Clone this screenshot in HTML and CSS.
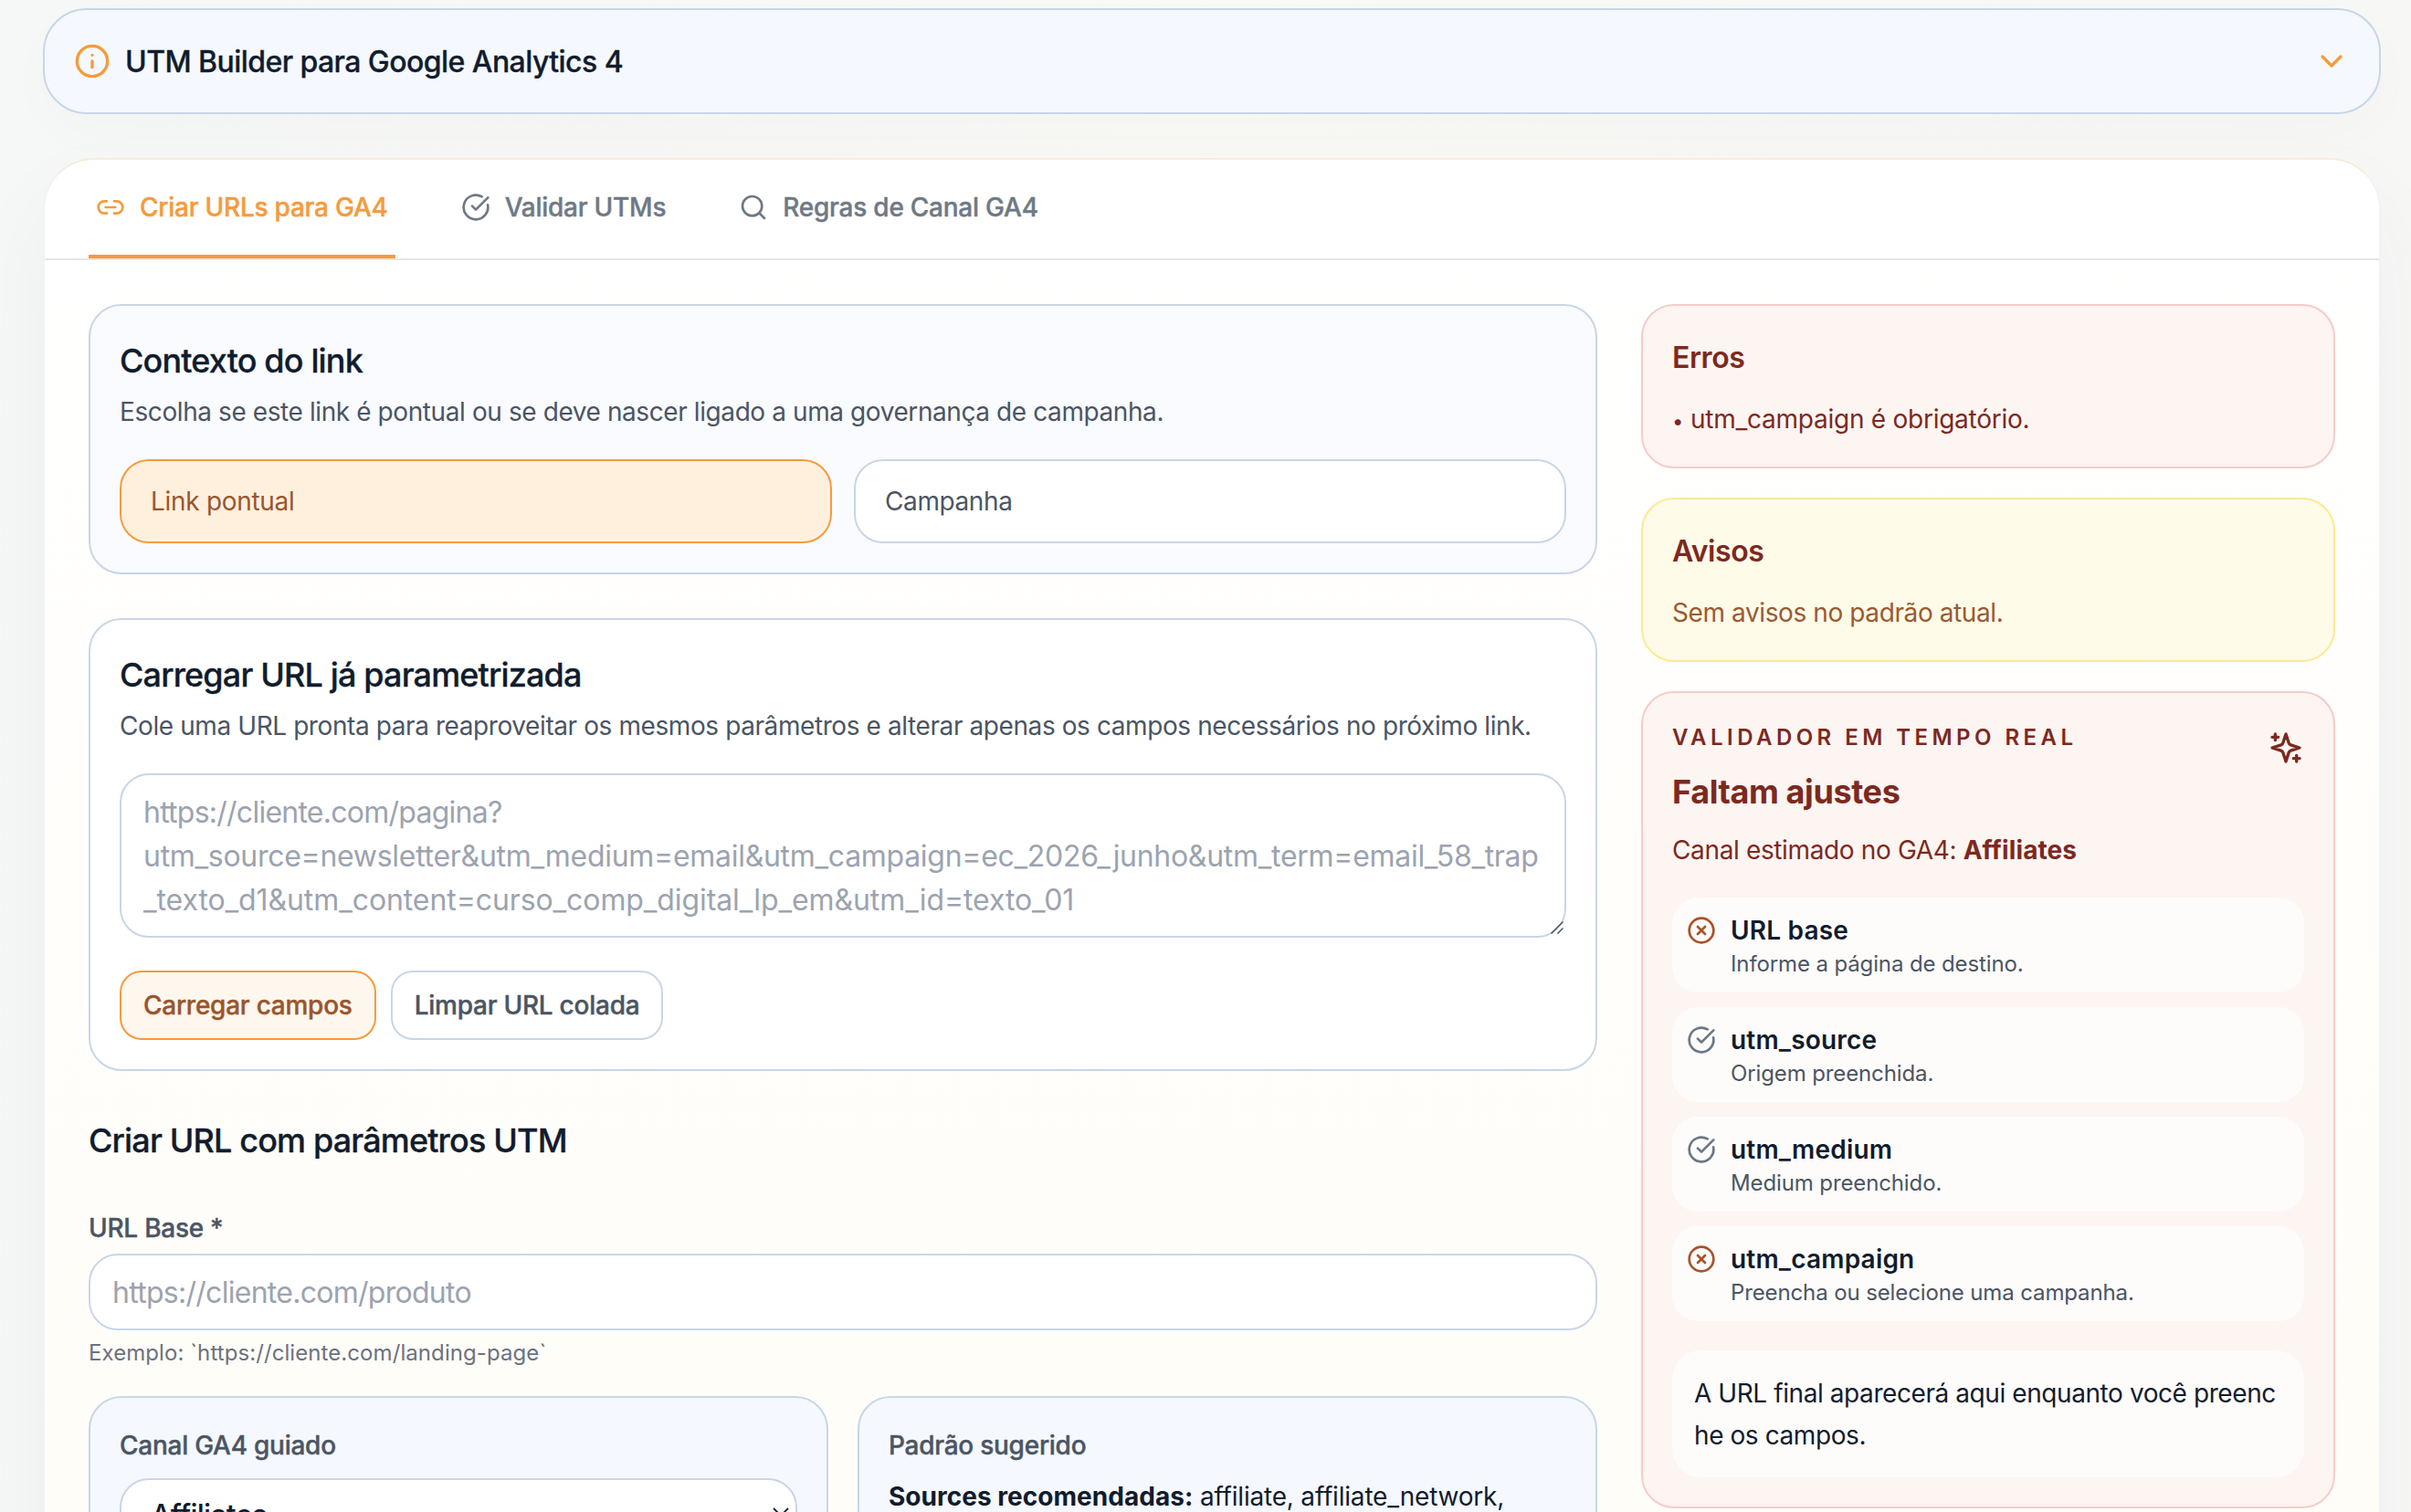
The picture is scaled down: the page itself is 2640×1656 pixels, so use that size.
FILE: index.html
```html
<!DOCTYPE html>
<html lang="pt-BR">

<head>
    <meta charset="UTF-8">
    <meta name="viewport" content="width=device-width, initial-scale=1.0">
    <title>UTM Builder para Google Analytics 4</title>
    <link rel="stylesheet" href="styles.css">
</head>

<body>

    <div class="page">
        <!-- Collapsible intro -->
        <header class="intro">
            <svg class="icon icon-lg" viewBox="0 0 24 24"><circle cx="12" cy="12" r="10"/><path d="M12 16v-4M12 8h.01"/></svg>
            <h1>UTM Builder para Google Analytics 4</h1>
            <svg class="icon icon-lg" viewBox="0 0 24 24"><path d="m6 9 6 6 6-6"/></svg>
        </header>

        <main class="panel">
            <nav class="tabs">
                <button class="tab active">
                    <svg class="icon" viewBox="0 0 24 24"><path d="M9 17H7A5 5 0 0 1 7 7h2M15 7h2a5 5 0 1 1 0 10h-2M8 12h8"/></svg>
                    <span>Criar URLs para GA4</span>
                </button>
                <button class="tab">
                    <svg class="icon" viewBox="0 0 24 24"><path d="M21.801 10A10 10 0 1 1 17 3.335M9 11l3 3L22 4"/></svg>
                    <span>Validar UTMs</span>
                </button>
                <button class="tab">
                    <svg class="icon" viewBox="0 0 24 24"><circle cx="11" cy="11" r="8"/><path d="m21 21-4.3-4.3"/></svg>
                    <span>Regras de Canal GA4</span>
                </button>
            </nav>

            <div class="content">
                <div class="form">
                    <!-- Link context -->
                    <section class="card card-soft">
                        <h2>Contexto do link</h2>
                        <p class="desc">Escolha se este link é pontual ou se deve nascer ligado a uma governança de campanha.</p>
                        <div class="options">
                            <button class="option selected">Link pontual</button>
                            <button class="option">Campanha</button>
                        </div>
                    </section>

                    <!-- Load an existing URL -->
                    <section class="card">
                        <h2>Carregar URL já parametrizada</h2>
                        <p class="desc">Cole uma URL pronta para reaproveitar os mesmos parâmetros e alterar apenas os campos necessários no próximo link.</p>
                        <div class="textarea">
                            <span class="line tight">https://cliente.com/pagina?</span>
                            <span class="line">utm_source=newsletter&amp;utm_medium=email&amp;utm_campaign=ec_2026_junho&amp;utm_term=email_58_trap</span>
                            <span class="line loose">_texto_d1&amp;utm_content=curso_comp_digital_lp_em&amp;utm_id=texto_01</span>
                            <svg class="grip" viewBox="0 0 14 14"><path d="M0.5 13.5 13.5 0.5M7.5 13.5l6-6"/></svg>
                        </div>
                        <div class="actions">
                            <button class="btn btn-primary">Carregar campos</button>
                            <button class="btn">Limpar URL colada</button>
                        </div>
                    </section>

                    <h2>Criar URL com parâmetros UTM</h2>

                    <div class="field">
                        <label for="base">URL Base *</label>
                        <input type="text" id="base" placeholder="https://cliente.com/produto">
                        <small>Exemplo: `https://cliente.com/landing-page`</small>
                    </div>

                    <div class="guides">
                        <section class="card card-blue">
                            <label>Canal GA4 guiado</label>
                            <div class="select">
                                <span>Affiliates</span>
                                <svg class="caret" viewBox="0 0 18 18"><path d="m1 1 8 8 8-8"/></svg>
                            </div>
                        </section>
                        <section class="card card-blue">
                            <label>Padrão sugerido</label>
                            <p class="sources"><strong>Sources recomendadas:</strong> affiliate, affiliate_network,</p>
                        </section>
                    </div>
                </div>

                <aside class="sidebar">
                    <section class="card alert">
                        <h3>Erros</h3>
                        <p class="error"><span class="bullet">•</span>utm_campaign é obrigatório.</p>
                    </section>

                    <section class="card alert warning">
                        <h3>Avisos</h3>
                        <p>Sem avisos no padrão atual.</p>
                    </section>

                    <!-- Live validator -->
                    <section class="card alert validator">
                        <div class="validator-head">
                            <div>
                                <div class="eyebrow">Validador em tempo real</div>
                                <div class="status">Faltam ajustes</div>
                            </div>
                            <svg class="icon icon-lg" viewBox="0 0 24 24"><path d="m12 3-1.912 5.813a2 2 0 0 1-1.275 1.275L3 12l5.813 1.912a2 2 0 0 1 1.275 1.275L12 21l1.912-5.813a2 2 0 0 1 1.275-1.275L21 12l-5.813-1.912a2 2 0 0 1-1.275-1.275L12 3ZM5 3v4M19 17v4M3 5h4M17 19h4"/></svg>
                        </div>
                        <p class="channel">Canal estimado no GA4: <strong>Affiliates</strong></p>
                        <ul class="checks">
                            <li>
                                <svg class="icon bad" viewBox="0 0 24 24"><circle cx="12" cy="12" r="10"/><path d="m15 9-6 6M9 9l6 6"/></svg>
                                <div><b>URL base</b><small>Informe a página de destino.</small></div>
                            </li>
                            <li>
                                <svg class="icon ok" viewBox="0 0 24 24"><path d="M21.801 10A10 10 0 1 1 17 3.335M9 11l3 3L22 4"/></svg>
                                <div><b>utm_source</b><small>Origem preenchida.</small></div>
                            </li>
                            <li>
                                <svg class="icon ok" viewBox="0 0 24 24"><path d="M21.801 10A10 10 0 1 1 17 3.335M9 11l3 3L22 4"/></svg>
                                <div><b>utm_medium</b><small>Medium preenchido.</small></div>
                            </li>
                            <li>
                                <svg class="icon bad" viewBox="0 0 24 24"><circle cx="12" cy="12" r="10"/><path d="m15 9-6 6M9 9l6 6"/></svg>
                                <div><b>utm_campaign</b><small>Preencha ou selecione uma campanha.</small></div>
                            </li>
                        </ul>
                        <div class="final-url">A URL final aparecerá aqui enquanto você preenche os campos.</div>
                    </section>
                </aside>
            </div>
        </main>
    </div>

</body>

</html>
```

FILE: styles.css
```css
* {
    box-sizing: border-box;
    margin: 0;
    padding: 0;
}

body {
    font-family: Inter, "Liberation Sans", sans-serif;
    font-size: 28px;
    line-height: 40px;
    letter-spacing: -0.4px;
    color: #111c2d;
    background: linear-gradient(90deg, #f6f8f7 0%, #f9f9f6 50%, #f7f8f6 100%);
    height: 1656px;
    overflow: hidden;
}

button,
input {
    font: inherit;
    letter-spacing: inherit;
    color: inherit;
    background: none;
    border: none;
    outline: none;
}

h1,
h2 {
    font-weight: 500;
    -webkit-text-stroke: 0.3px currentColor;
}

h2 {
    font-size: 36px;
    line-height: 56px;
    letter-spacing: -0.85px;
}

.page {
    padding: 9px 33px 0 47px;
    height: 1656px;
    overflow: hidden;
}

.icon {
    width: 32px;
    height: 32px;
    flex-shrink: 0;
    fill: none;
    stroke: currentColor;
    stroke-width: 2;
    stroke-linecap: round;
    stroke-linejoin: round;
}

.icon-lg {
    width: 40px;
    height: 40px;
}

/* Intro */
.intro {
    display: flex;
    align-items: center;
    gap: 16px;
    height: 116px;
    padding: 0 32px;
    border: 2px solid #c8d6e6;
    border-radius: 48px;
    background: #f5f8fe;
    box-shadow: 0 20px 60px rgba(15, 40, 60, 0.02);
}

.intro h1 {
    flex: 1;
    padding-top: 2px;
    font-size: 32px;
    line-height: 48px;
    letter-spacing: -0.56px;
}

.intro .icon {
    color: #f59b3c;
}

/* Main panel */
.panel {
    margin-top: 48px;
    border: 2px solid;
    border-color: rgba(245, 155, 60, 0.14) rgba(200, 214, 230, 0.15);
    border-radius: 56px;
    background: linear-gradient(180deg, #ffffff 0%, #fffdf8 1480px);
    background-clip: padding-box;
    height: 1700px;
    box-shadow: 0 40px 100px rgba(15, 40, 60, 0.045);
}

.tabs {
    display: flex;
    gap: 64px;
    padding: 0 48px;
    border-bottom: 2px solid #e5e5e5;
}

.tab {
    display: flex;
    align-items: center;
    gap: 16px;
    padding: 32px 8px;
    border-bottom: 4px solid transparent;
    font-weight: 500;
    letter-spacing: -0.24px;
    color: #6f7985;
    -webkit-text-stroke: 0.4px currentColor;
}

.tab.active {
    color: #f59b3c;
    border-color: #f59b3c;
}

.content {
    display: grid;
    grid-template-columns: 1fr 760px;
    gap: 48px;
    padding: 48px;
    align-items: start;
}

.form {
    display: flex;
    flex-direction: column;
    gap: 48px;
}

.card {
    padding: 32px;
    border: 2px solid #c8d6e6;
    border-radius: 36px;
    background: #ffffff;
}

.card-soft {
    background: #fafbff;
}

.card-blue {
    background: #f5f8fe;
}

.desc {
    margin-top: 8px;
    color: #4b5563;
    letter-spacing: -0.41px;
}

.options {
    display: grid;
    grid-template-columns: 1fr 1fr;
    gap: 24px;
    margin-top: 32px;
}

.option {
    padding: 24px 32px;
    border: 2px solid #c8d6e6;
    border-radius: 32px;
    background: #ffffff;
    color: #4b5563;
    text-align: left;
}

.option.selected {
    border-color: #f59b3c;
    background: #fff0de;
    color: #9a552b;
    letter-spacing: -0.3px;
}

.textarea {
    position: relative;
    height: 180px;
    margin-top: 32px;
    padding: 17px 0 15px 24px;
    border: 2px solid #c8d6e6;
    border-radius: 32px;
    background: #ffffff;
    font-size: 32px;
    line-height: 48px;
    color: #9ca3af;
}

.line {
    display: block;
    white-space: nowrap;
    letter-spacing: -0.29px;
}

.tight {
    letter-spacing: -0.75px;
}

.loose {
    letter-spacing: -0.09px;
}

::placeholder {
    color: #9ca3af;
}

.grip {
    position: absolute;
    right: 1px;
    bottom: 2px;
    width: 14px;
    height: 14px;
    fill: none;
    stroke: #4b5563;
    stroke-width: 1.5;
}

.actions {
    display: flex;
    gap: 16px;
    margin-top: 36px;
}

.btn {
    padding: 16px 24px;
    border: 2px solid #c8d6e6;
    border-radius: 24px;
    background: #ffffff;
    font-weight: 500;
    letter-spacing: -0.25px;
    color: #4b5563;
    -webkit-text-stroke: 0.4px currentColor;
}

.btn-primary {
    border-color: #f59b3c;
    background: #fef7ee;
    color: #9a552b;
}

/* Fields */
label {
    display: block;
    font-weight: 500;
    letter-spacing: -0.26px;
    color: #4b5563;
    -webkit-text-stroke: 0.4px currentColor;
}

.field input {
    display: block;
    width: 100%;
    height: 84px;
    margin: 8px 0;
    padding: 0 24px;
    border: 2px solid #c8d6e6;
    border-radius: 32px;
    background: #ffffff;
    font-size: 32px;
    letter-spacing: -0.72px;
}

small {
    display: block;
    font-size: 24px;
    line-height: 32px;
    letter-spacing: 0.08px;
    color: #6b7280;
}

.field small {
    padding-top: 1px;
    margin-bottom: -1px;
}

.guides {
    display: grid;
    grid-template-columns: 1fr 1fr;
    gap: 32px;
    margin-top: -16px;
}

.select {
    display: flex;
    align-items: center;
    justify-content: space-between;
    height: 84px;
    margin-top: 16px;
    padding: 0 7px 2px 32px;
    border: 2px solid #c8d6e6;
    border-radius: 32px;
    background: #ffffff;
    font-size: 32px;
    font-weight: 500;
    letter-spacing: -0.75px;
}

.caret {
    width: 18px;
    height: 18px;
    fill: none;
    stroke: #111c2d;
    stroke-width: 1.8;
}

.sources {
    margin-top: 16px;
    letter-spacing: -0.2px;
}

.sources strong {
    letter-spacing: 0.03px;
}

/* Sidebar */
.sidebar {
    display: flex;
    flex-direction: column;
    gap: 32px;
}

.alert {
    border-color: #f6cbc8;
    background: #fdf5f2;
    color: #7c2920;
}

.alert h3 {
    padding-top: 1px;
    margin-bottom: 23px;
    font-size: 32px;
    line-height: 48px;
    font-weight: 600;
}

.error {
    letter-spacing: -0.25px;
}

.bullet {
    display: inline-block;
    width: 20px;
    font-size: 22px;
    line-height: 20px;
}

.warning {
    border-color: #fde992;
    background: #fffbe9;
}

.warning p {
    color: #9a5a30;
}

.validator-head {
    display: flex;
    justify-content: space-between;
}

.validator-head .icon {
    margin-top: 8px;
}

.eyebrow {
    padding-top: 1px;
    font-size: 24px;
    line-height: 32px;
    font-weight: 600;
    letter-spacing: 4.45px;
    text-transform: uppercase;
}

.status {
    margin-top: 15px;
    font-size: 36px;
    line-height: 56px;
    font-weight: 700;
}

.channel {
    margin-top: 16px;
    letter-spacing: -0.36px;
}

.channel strong {
    letter-spacing: 0.1px;
}

.checks {
    display: grid;
    gap: 16px;
    margin-top: 32px;
    list-style: none;
}

.checks li {
    display: flex;
    gap: 16px;
    height: 104px;
    padding: 16px;
    border-radius: 28px;
    background: #fefcfb;
    color: #111c2d;
}

.checks .icon {
    margin-top: 4px;
}

.checks b {
    display: block;
    font-weight: 600;
    letter-spacing: 0.2px;
}

.checks small {
    padding-top: 1px;
    color: #4b5563;
    letter-spacing: -0.12px;
}

.bad {
    color: #a85328;
}

.ok {
    color: #6b7785;
}

.final-url {
    margin-top: 32px;
    padding: 25px 24px 23px;
    border-radius: 32px;
    background: #fefcfb;
    color: #111c2d;
    line-height: 45.5px;
    letter-spacing: -0.42px;
    word-break: break-all;
}
```
